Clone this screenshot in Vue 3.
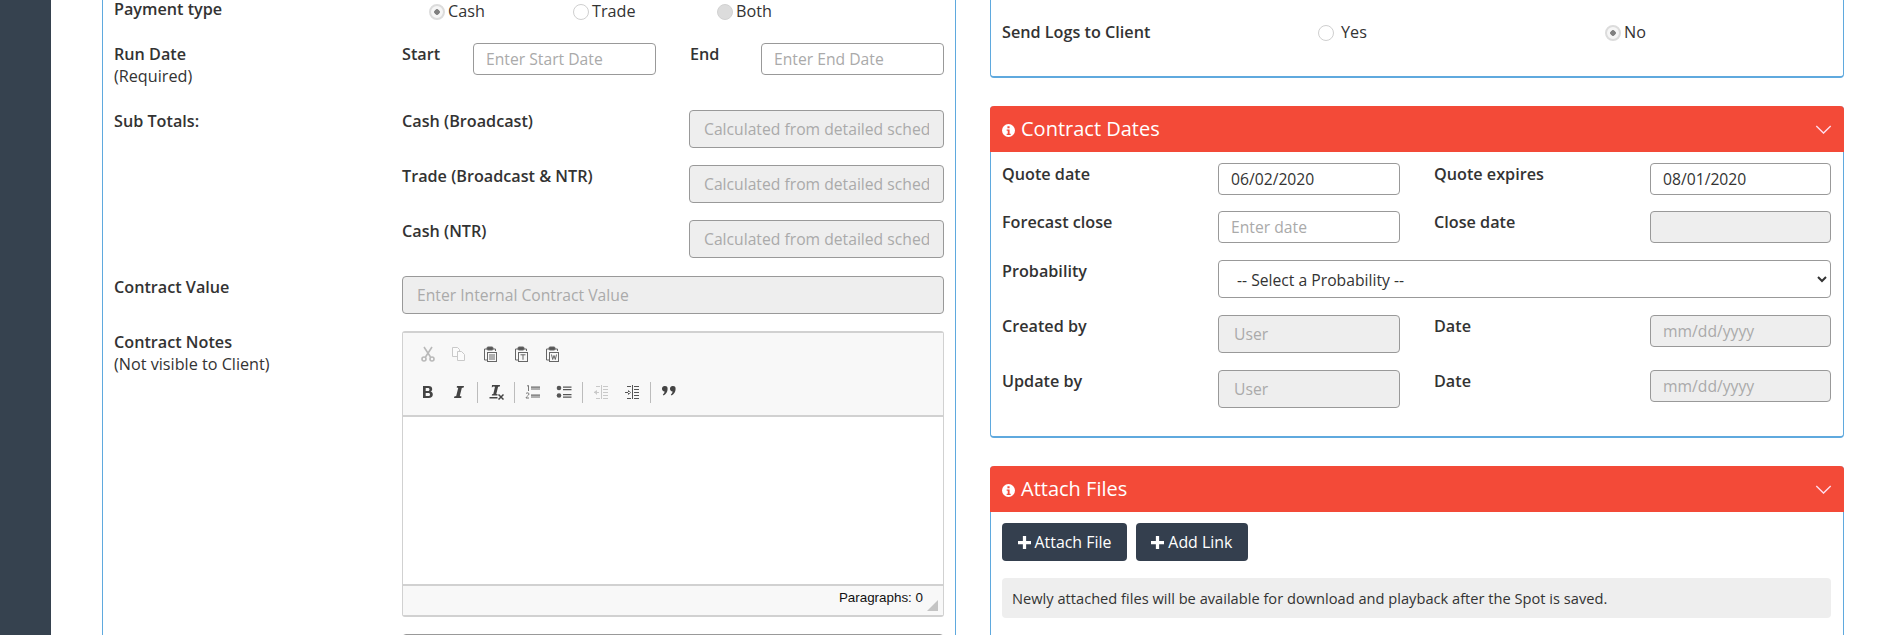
<script setup>
const subTotals = ['Cash (Broadcast)', 'Trade (Broadcast & NTR)', 'Cash (NTR)']
</script>

<template>
  <div class="page">
    <aside class="sidebar"></aside>
    <main class="main">
      <section class="panel left">
        <div class="row payment">
          <div class="label">Payment type</div>
          <div class="radios">
            <label class="radio-item r1"><span class="radio checked"></span>Cash</label>
            <label class="radio-item r1"><span class="radio"></span>Trade</label>
            <label class="radio-item"><span class="radio filled"></span>Both</label>
          </div>
        </div>
        <div class="row rundate">
          <div class="label">Run Date<br /><span class="sub">(Required)</span></div>
          <div class="dates">
            <span class="label start">Start</span>
            <input class="ctl short" placeholder="Enter Start Date" />
            <span class="label end">End</span>
            <input class="ctl short" placeholder="Enter End Date" />
          </div>
        </div>
        <div class="row subs">
          <div class="label">Sub Totals:</div>
          <div class="subrows">
            <div v-for="s in subTotals" :key="s" class="subrow">
              <span class="label">{{ s }}</span>
              <input class="ctl tall sub-input" disabled placeholder="Calculated from detailed schedule" />
            </div>
          </div>
        </div>
        <div class="row">
          <div class="label">Contract Value</div>
          <input class="ctl tall grow" disabled placeholder="Enter Internal Contract Value" />
        </div>
        <div class="row">
          <div class="label">Contract Notes<br /><span class="sub">(Not visible to Client)</span></div>
          <div class="editor">
            <div class="toolbar">
              <div class="tool-line">
                <svg class="ico" viewBox="0 0 16 16"><g fill="none" stroke="#b9b9b9" stroke-width="1.6"><path d="M4 1l6.500 10M12 1L5.500 11"/><circle cx="4" cy="13" r="2"/><circle cx="12" cy="13" r="2"/></g></svg>
                <svg class="ico" viewBox="0 0 16 16"><g fill="#fbfbfb" stroke="#c9c9c9"><path d="M1.500 1.500h5l2 2v7h-7z"/><path d="M6.500 5.500h4l3 3v6h-7z"/></g></svg>
                <svg class="ico" viewBox="0 0 16 16"><g fill="none" stroke="#666"><path d="M5 3H2.500v11H5"/><path d="M11 3h2.500v2"/><rect x="5" y="1" width="6" height="3" rx="1" fill="#555"/><rect x="5.500" y="6.500" width="9" height="9" fill="#f8f8f8"/><path d="M7 9h6M7 11h6M7 13h6"/></g></svg>
                <svg class="ico" viewBox="0 0 16 16"><g fill="none" stroke="#666"><path d="M5 3H2.500v11H5"/><path d="M11 3h2.500v2"/><rect x="5" y="1" width="6" height="3" rx="1" fill="#555"/><rect x="5.500" y="6.500" width="9" height="9" fill="#f8f8f8"/><path d="M7.500 8.800h5M10 8.800v5"/></g></svg>
                <svg class="ico" viewBox="0 0 16 16"><g fill="none" stroke="#666"><path d="M5 3H2.500v11H5"/><path d="M11 3h2.500v2"/><rect x="5" y="1" width="6" height="3" rx="1" fill="#555"/><rect x="5.500" y="6.500" width="9" height="9" fill="#f8f8f8"/><path d="M7.500 8.500l1.200 5 1.300-4 1.300 4 1.200-5"/></g></svg>
              </div>
              <div class="tool-line second">
                <svg class="ico" viewBox="0 0 16 16"><path fill="#444" fill-rule="evenodd" d="M3 2h5.500c2.500 0 3.700 1.200 3.700 3 0 1.300-.7 2.200-1.800 2.600 1.500.3 2.400 1.400 2.400 2.900 0 2.200-1.500 3.500-4.200 3.500H3zM5.700 4v3h2.300c1 0 1.500-.6 1.500-1.500S9 4 8 4zm0 5v3h2.600c1.100 0 1.700-.5 1.700-1.500S9.400 9 8.300 9z"/></svg>
                <svg class="ico" viewBox="0 0 16 16"><path fill="#444" d="M6 2h7l-.3 1.500-1.900.5-2 8 1.700.5-.3 1.500H3l.3-1.500 1.900-.5 2-8L5.700 3.500z"/></svg>
                <span class="sep"></span>
                <svg class="ico" viewBox="0 0 16 16"><path fill="#444" d="M4 1h8l-.2 1.500-1.700.3L8.300 10l1.300.3-.2 1.200H3.800l.2-1.200 1.300-.3L7 2.800l-1.700-.3-1.500 1z"/><path fill="#444" d="M1.500 13h8v1.500h-8z"/><path stroke="#444" stroke-width="1.500" d="M10.500 10.500l5 5M15.500 10.500l-5 5"/></svg>
                <span class="sep"></span>
                <svg class="ico" viewBox="0 0 16 16"><path fill="#666" d="M6 2.500h9v1.300H6zM6 10.500h9v1.300H6zM6 4.500h9v1H6zM6 12.500h9v1H6z"/><path fill="none" stroke="#777" d="M2 2l1.500-.5V7M1 9.500c1-1 3-.8 3 .5S1.200 12.500 1 14h3"/></svg>
                <svg class="ico" viewBox="0 0 16 16"><g fill="#555"><circle cx="3" cy="4" r="2.300"/><circle cx="3" cy="11.500" r="2.300"/><path d="M7 2.500h8.500v1.300H7zM7 5h8.500v1.300H7zM7 10h8.500v1.300H7zM7 12.500h8.500v1.300H7z"/></g></svg>
                <span class="sep"></span>
                <svg class="ico" viewBox="0 0 16 16"><g fill="#c9c9c9"><path d="M8 1h1v14H8zM10 2h5v1h-5zM10 5h5v1h-5zM10 8h5v1h-5zM10 11h5v1h-5zM10 14h5v1h-5zM3 2h4v1H3zM3 14h4v1H3zM1 8h5v1H1zM1 8l3-2v5z"/></g></svg>
                <svg class="ico" viewBox="0 0 16 16"><g fill="#555"><path d="M8 1h1v14H8zM10 2h5v1h-5zM10 5h5v1h-5zM10 8h5v1h-5zM10 11h5v1h-5zM10 14h5v1h-5zM3 2h4v1H3zM3 14h4v1H3zM1 8h5v1H1zM7 8.500l-3-2.500v5z"/></g></svg>
                <span class="sep"></span>
                <svg class="ico" viewBox="0 0 16 16"><g fill="#444"><path d="M1 4.500a2.800 2.800 0 1 1 5.600.4c0 3-1.500 5-4 6.500l-.8-1c1-.8 1.600-1.500 1.800-3A2.800 2.800 0 0 1 1 4.500z"/><path d="M9 4.500a2.800 2.800 0 1 1 5.600.4c0 3-1.500 5-4 6.500l-.8-1c1-.8 1.600-1.500 1.800-3A2.800 2.800 0 0 1 9 4.500z"/></g></svg>
              </div>
            </div>
            <div class="edit-body"></div>
            <div class="edit-foot">
              <span class="para">Paragraphs: 0</span>
              <span class="resize"></span>
            </div>
          </div>
        </div>
        <div class="row">
          <div class="label"></div>
          <input class="ctl tall grow" />
        </div>
      </section>

      <div class="right">
        <section class="panel logs">
          <div class="label logs-label">Send Logs to Client</div>
          <label class="radio-item yes"><span class="radio"></span><span class="yes-text">Yes</span></label>
          <label class="radio-item"><span class="radio checked"></span>No</label>
        </section>

        <section class="panel card dates-card">
          <header class="head">
            <svg class="info" viewBox="0 0 12 12"><circle cx="6" cy="6" r="6" fill="#fff"/><path fill="#f34a38" d="M5 2h2v2H5zM4.300 5h2.700v4h1v1.200H4.300V9h1V6.200h-1z"/></svg>
            <h3>Contract Dates</h3>
            <svg class="chev" viewBox="0 0 18 10"><path fill="none" stroke="#fde" stroke-width="1.500" d="M1 1l8 8 8-8"/></svg>
          </header>
          <div class="card-body">
            <div class="drow">
              <span class="label c1">Quote date</span>
              <input class="ctl w1" value="06/02/2020" />
              <span class="label c3">Quote expires</span>
              <input class="ctl w2" value="08/01/2020" />
            </div>
            <div class="drow">
              <span class="label c1">Forecast close</span>
              <input class="ctl w1" placeholder="Enter date" />
              <span class="label c3">Close date</span>
              <input class="ctl w2" disabled />
            </div>
            <div class="drow">
              <span class="label c1">Probability</span>
              <select class="ctl prob"><option>-- Select a Probability --</option></select>
            </div>
            <div class="drow">
              <span class="label c1">Created by</span>
              <input class="ctl tall w1 pad15" disabled placeholder="User" />
              <span class="label c3">Date</span>
              <input class="ctl w2" disabled placeholder="mm/dd/yyyy" />
            </div>
            <div class="drow">
              <span class="label c1">Update by</span>
              <input class="ctl tall w1 pad15" disabled placeholder="User" />
              <span class="label c3">Date</span>
              <input class="ctl w2" disabled placeholder="mm/dd/yyyy" />
            </div>
          </div>
        </section>

        <section class="panel card attach">
          <header class="head">
            <svg class="info" viewBox="0 0 12 12"><circle cx="6" cy="6" r="6" fill="#fff"/><path fill="#f34a38" d="M5 2h2v2H5zM4.300 5h2.700v4h1v1.200H4.300V9h1V6.200h-1z"/></svg>
            <h3>Attach Files</h3>
            <svg class="chev" viewBox="0 0 18 10"><path fill="none" stroke="#fde" stroke-width="1.500" d="M1 1l8 8 8-8"/></svg>
          </header>
          <div class="card-body">
            <div class="btns">
              <button class="btn"><svg class="plus" viewBox="0 0 12 12"><path fill="#fff" d="M4.500 0h3v4.500H12v3H7.500V12h-3V7.500H0v-3h4.500z"/></svg>Attach File</button>
              <button class="btn"><svg class="plus" viewBox="0 0 12 12"><path fill="#fff" d="M4.500 0h3v4.500H12v3H7.500V12h-3V7.500H0v-3h4.500z"/></svg>Add Link</button>
            </div>
            <div class="well">Newly attached files will be available for download and playback after the Spot is saved.</div>
          </div>
        </section>
      </div>
    </main>
  </div>
</template>

<style>
html, body { margin: 0; background: #fff; overflow: hidden; }
</style>

<style scoped>
.page {
  display: flex;
  width: 1894px;
  height: 635px;
  overflow: hidden;
  background: #fff;
  color: #333;
  font-family: "Open Sans", sans-serif;
  font-size: 16.200px;
  line-height: 22px;
}
.sidebar { width: 51px; flex: none; background: #36424f; }
.main {
  display: flex;
  flex: 1;
  gap: 34px;
  padding-left: 51px;
  align-items: flex-start;
}
.panel { box-sizing: border-box; border: 1px solid #5fa9de; border-top: 0; }
.left {
  width: 854px;
  height: 635px;
  flex: none;
  padding: 0 11px;
  border-bottom: 0;
  overflow: hidden;
}
.right { width: 854px; flex: none; }
.label { font-weight: 600; color: #333; }
.sub { font-weight: 400; }
.row { display: flex; margin-bottom: 17px; }
.row > .label { width: 288px; flex: none; }
.payment { height: 26px; }
.payment > .label { line-height: 19px; }
.radios { display: flex; padding-left: 27px; }
.radio-item { display: flex; align-items: center; height: 22px; }
.radio-item.r1 { width: 144px; }
.radio {
  box-sizing: border-box;
  width: 16px;
  height: 16px;
  margin-top: 2px;
  border: 1px solid #cfcfcf;
  border-radius: 50%;
  background: #fff;
  margin-right: 3px;
  flex: none;
}
.radio.checked { background: radial-gradient(circle, #808080 0 2.500px, #f6f6f6 3px); border: 2px solid #dcdcdc; }
.radio.filled { background: #dcdcdc; border-color: #d2d2d2; }
.rundate { height: 50px; }
.dates { display: flex; }
.dates .start { width: 71px; }
.dates .end { width: 71px; margin-left: 34px; }
.ctl {
  box-sizing: border-box;
  display: block;
  height: 32px;
  padding: 0 12px;
  border: 1px solid #999;
  border-radius: 4px;
  background: #fff;
  color: #333;
  font: 15.700px "Open Sans", sans-serif;
  outline: none;
}
.ctl::placeholder { color: #aaa; opacity: 1; }
.ctl:disabled { background: #eee; }
.ctl.tall { height: 38px; }
.pad15 { padding: 0 15px; }
.short { width: 183px; }
.subs { height: 149px; }
.subrows { flex: 1; }
.subrow { display: flex; justify-content: space-between; margin-bottom: 17px; }
.sub-input { width: 255px; padding: 0 14px; }
.grow { width: 542px; padding: 0 14px; }
.editor {
  box-sizing: border-box;
  width: 542px;
  height: 286px;
  border: 1px solid #d1d1d1;
  border-top-width: 2px;
  border-bottom-width: 2px;
  border-radius: 3px;
  display: flex;
  flex-direction: column;
}
.toolbar { height: 84px; background: #f8f8f8; border-bottom: 2px solid #d1d1d1; box-sizing: border-box; padding: 11px 0 0 17px; flex: none; }
.tool-line { display: flex; align-items: center; height: 20px; }
.tool-line .ico { margin-right: 15px; }
.tool-line.second { margin-top: 18px; }
.ico { width: 16px; height: 16px; flex: none; }
.sep { width: 1px; height: 21px; background: #bcbcbc; margin: 0 10px 0 -5px; flex: none; }
.edit-body { flex: 1; background: #fff; }
.edit-foot {
  position: relative;
  height: 31px;
  box-sizing: border-box;
  background: #f8f8f8;
  border-top: 2px solid #d1d1d1;
  text-align: right;
  padding-right: 20px;
  font: 13.400px/24px "Liberation Sans", sans-serif;
  color: #111;
}
.resize {
  position: absolute;
  right: 5px;
  bottom: 4px;
  width: 0;
  height: 0;
  border-left: 11px solid transparent;
  border-bottom: 11px solid #c4c4c4;
}
.logs {
  height: 78px;
  border-bottom-width: 2px;
  border-radius: 0 0 4px 4px;
  padding: 21px 11px 0;
  display: flex;
  align-items: flex-start;
}
.logs-label { width: 316px; flex: none; }
.yes { width: 287px; flex: none; }
.yes-text { margin-left: 4px; }
.card { border-top: 0; border-bottom-width: 2px; border-radius: 4px; margin-top: 28px; }
.head {
  height: 46px;
  background: #f34a38;
  border-radius: 4px 4px 0 0;
  display: flex;
  align-items: center;
  margin: 0 -1px;
  padding: 0 12px;
  color: #fff;
}
.head h3 { margin: 0; font-size: 20px; font-weight: 400; line-height: 46px; flex: 1; padding-left: 6px; }
.info { width: 13px; height: 13px; margin-top: 3px; flex: none; }
.chev { width: 17px; height: 9px; flex: none; }
.card-body { padding: 11px 12px 0 11px; }
.dates-card { height: 332px; }
.drow { display: flex; margin-bottom: 17px; }
.drow:first-child { margin-bottom: 16px; }
.c1 { width: 216px; flex: none; }
.c3 { width: 216px; flex: none; margin-left: 34px; }
.w1 { width: 182px; flex: none; }
.w2 { width: 181px; flex: none; }
.prob { width: 613px; height: 38px; padding: 2px 14px 0; flex: none; }
.attach { height: 300px; border-bottom: 0; border-radius: 4px 4px 0 0; }
.btns { display: flex; gap: 9px; }
.btn {
  box-sizing: border-box;
  height: 38px;
  padding: 0 15.500px;
  display: flex;
  align-items: center;
  gap: 4px;
  background: #343f4e;
  color: #fff;
  border: 0;
  border-radius: 4px;
  font: 15.900px "Open Sans", sans-serif;
}
.plus { width: 13px; height: 13px; flex: none; }
.well {
  margin-top: 17px;
  height: 40px;
  line-height: 40px;
  background: #eee;
  border-radius: 4px;
  padding-left: 10px;
  font-size: 14.650px;
  color: #333;
}
</style>
